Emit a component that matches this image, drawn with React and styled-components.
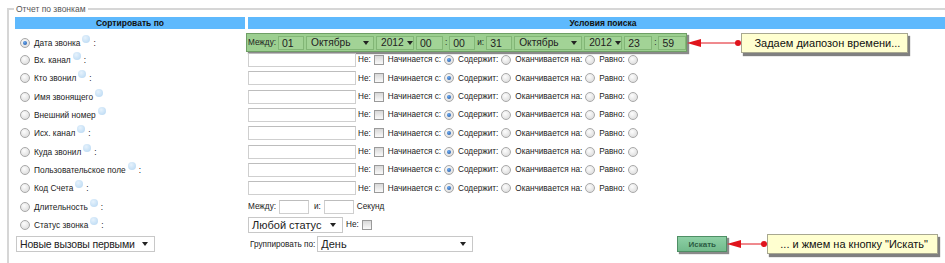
import React from 'react'
import styled, { createGlobalStyle } from 'styled-components'

const GlobalStyle = createGlobalStyle`
  body {
    margin: 0;
    overflow: hidden;
    background: #fff;
    color: #222;
    font-family: "Liberation Sans", Arial, sans-serif;
  }
`

const Fieldset = styled.fieldset`
  margin: 4px 0 0 7px;
  padding: 3px 0 20px 6px;
  width: 943px;
  border: 2px solid #d6d6d6;
  border-right: none;
  border-bottom: none;
`

const Legend = styled.legend`
  margin-left: -1px;
  padding: 0 2px;
  font-size: 8.5px;
  line-height: 10px;
  color: #555;
`

const Grid = styled.div`
  display: grid;
  grid-template-columns: 230px 1fr;
  column-gap: 3px;
  align-items: center;
  height: ${p => p.$h}px;
`

const Head = styled.div`
  height: 12px;
  line-height: 12px;
  background: #5eb9fd;
  font-size: 8.5px;
  font-weight: bold;
  text-align: center;
  color: #111;
`

const Spacer = styled.div`
  height: 3.5px;
`

const LeftCell = styled.div`
  display: flex;
  align-items: center;
  gap: 4px;
  padding-left: ${p => p.$pl ?? 5}px;
  font-size: 8.3px;
  white-space: nowrap;
`

const RightCell = styled.div`
  display: flex;
  align-items: center;
  gap: ${p => p.$gap ?? 3}px;
  font-size: 8.2px;
  white-space: nowrap;
`

const Radio = styled.span`
  position: relative;
  flex: none;
  width: 10px;
  height: 10px;
  box-sizing: border-box;
  border-radius: 50%;
  border: 1px solid #a8a8a8;
  background: radial-gradient(circle at 40% 35%, #fdfdfd, #d6d6d6);
  &::after {
    content: '';
    display: ${p => (p.$on ? 'block' : 'none')};
    position: absolute;
    left: 2px;
    top: 2px;
    width: 4px;
    height: 4px;
    border-radius: 50%;
    background: radial-gradient(circle at 40% 35%, #6aa9f0, #1a4f9c);
  }
`

const Check = styled.span`
  flex: none;
  width: 10px;
  height: 10px;
  box-sizing: border-box;
  border: 1px solid #9a9a9a;
  background: linear-gradient(#d8d8d8, #fafafa);
`

const Help = styled.span`
  display: inline-block;
  width: 8px;
  height: 8px;
  margin-left: 2px;
  border-radius: 50%;
  background: radial-gradient(circle at 40% 35%, #e6f2fc, #b4d6f2);
  transform: translateY(-3px);
`

const Colon = styled.span`
  margin-left: 3px;
`

const Text = styled.span`
  margin-left: ${p => p.$ml || 0}px;
`

const Field = styled.span`
  display: inline-flex;
  align-items: center;
  flex: none;
  box-sizing: border-box;
  width: ${p => p.$w}px;
  height: 14px;
  padding-left: 3px;
  font-size: 10.5px;
  background: ${p => (p.$green ? '#a2d396' : '#fff')};
  border: 1px solid ${p => (p.$green ? '#82b676' : '#cfcfcf')};
  border-top-color: ${p => (p.$green ? '#82b676' : '#bdbdbd')};
`

const Select = styled.span`
  display: inline-flex;
  align-items: center;
  justify-content: space-between;
  flex: none;
  box-sizing: border-box;
  width: ${p => p.$w}px;
  height: ${p => (p.$green ? 14 : 16)}px;
  padding: 0 ${p => (p.$green ? 4 : 6)}px 0 ${p => (p.$green ? 4 : 3)}px;
  font-size: ${p => p.$fs || (p.$green ? 10.2 : 11)}px;
  letter-spacing: ${p => p.$ls || 0}px;
  white-space: nowrap;
  overflow: hidden;
  background: ${p => (p.$green ? '#a2d396' : '#fff')};
  border: 1px solid ${p => (p.$green ? '#82b676' : '#c8c8c8')};
`

const Caret = styled.span`
  flex: none;
  margin-left: 3px;
  width: 0;
  height: 0;
  border-left: 3px solid transparent;
  border-right: 3px solid transparent;
  border-top: 4px solid #222;
`

const Highlight = styled.div`
  display: flex;
  align-items: center;
  gap: 2px;
  margin-left: -2px;
  height: 19px;
  box-sizing: border-box;
  padding: 0 0 0 1px;
  background: #9ccf90;
  border: 1px solid #6f9f66;
  box-shadow: 2px 2px 1px #8a8a8a;
`

const Callout = styled.div`
  display: flex;
  align-items: center;
  box-sizing: border-box;
  width: ${p => p.$w}px;
  height: 20px;
  padding-left: ${p => p.$pl || 12}px;
  background: #ffffd0;
  border: 1px solid #a8a890;
  box-shadow: 2px 3px 1px #808080;
  font-size: 11px;
  color: #111;
`

const Button = styled.span`
  display: inline-flex;
  align-items: center;
  justify-content: center;
  box-sizing: border-box;
  width: 50px;
  height: 16px;
  margin-left: 204px;
  background: linear-gradient(#8dd0a5, #72bb8c);
  border: 1px solid #4f8f65;
  box-shadow: 2px 2px 1px #8a8a8a;
  font-size: 8px;
  font-weight: bold;
  color: #2b5c43;
`

const Pointer = ({ w }) => (
  <svg width={w} height="12" viewBox={`0 0 ${w} 12`} style={{ flex: 'none' }}>
    <line x1="10" y1="6" x2={w - 3} y2="6" stroke="#e0141c" strokeWidth="1" />
    <polygon points="0,6 14,2 14,10" fill="#e0141c" />
    <circle cx={w - 3} cy="6" r="3" fill="#e0141c" />
  </svg>
)

const sortFields = [
  ['Дата звонка', true],
  ['Вх. канал', true],
  ['Кто звонил', true],
  ['Имя звонящего', false],
  ['Внешний номер', false],
  ['Исх. канал', true],
  ['Куда звонил', true],
  ['Пользовательское поле', true],
  ['Код Счета', true],
  ['Длительность', true],
  ['Статус звонка', true],
]

const Condition = () => (
  <RightCell>
    <Field $w={108} />
    <Text $ml={-1}>Не:</Text>
    <Check />
    <Text $ml={1}>Начинается с:</Text>
    <Radio $on />
    <Text $ml={1}>Содержит:</Text>
    <Radio />
    <Text $ml={1}>Оканчивается на:</Text>
    <Radio />
    <Text $ml={1}>Равно:</Text>
    <Radio />
  </RightCell>
)

const TimeRange = () => (
  <RightCell $gap={0}>
    <Highlight>
      <Text>Между:</Text>
      <Field $green $w={26}>01</Field>
      <Select $green $w={68}>Октябрь<Caret /></Select>
      <Select $green $w={38}>2012<Caret /></Select>
      <Field $green $w={27}>00</Field>
      <Text>:</Text>
      <Field $green $w={26}>00</Field>
      <Text>и:</Text>
      <Field $green $w={26}>31</Field>
      <Select $green $w={68}>Октябрь<Caret /></Select>
      <Select $green $w={38}>2012<Caret /></Select>
      <Field $green $w={28}>23</Field>
      <Text>:</Text>
      <Field $green $w={28}>59</Field>
    </Highlight>
    <Pointer w={54} />
    <Callout $w={167}>Задаем диапозон времени...</Callout>
  </RightCell>
)

const rightCells = [
  <TimeRange />,
  ...Array.from({ length: 8 }, () => <Condition />),
  <RightCell>
    <Text>Между:</Text>
    <Field $w={30} />
    <Text $ml={2}>и:</Text>
    <Field $w={30} />
    <Text>Секунд</Text>
  </RightCell>,
  <RightCell>
    <Select $w={95}>Любой статус<Caret /></Select>
    <Text>Не:</Text>
    <Check />
  </RightCell>,
]

export default function App() {
  return (
    <>
      <GlobalStyle />
      <Fieldset>
        <Legend>Отчет по звонкам</Legend>
        <Grid $h={12}>
          <Head>Сортировать по</Head>
          <Head>Условия поиска</Head>
        </Grid>
        <Spacer />
        {sortFields.map(([label, colon], i) => (
          <Grid key={label} $h={18.33}>
            <LeftCell>
              <Radio $on={i === 0} />
              <span>
                {label}
                <Help />
                {colon && <Colon>:</Colon>}
              </span>
            </LeftCell>
            {rightCells[i]}
          </Grid>
        ))}
        <Grid $h={20}>
          <LeftCell $pl={1}>
            <Select $w={139} $fs={10.5} $ls={-0.2}>Новые вызовы первыми<Caret /></Select>
          </LeftCell>
          <RightCell $gap={0}>
            <Text $ml={2}>Группировать по:</Text>
            <Select $w={156} style={{ marginLeft: 2 }}>День<Caret /></Select>
            <Button>Искать</Button>
            <Pointer w={40} />
            <Callout $w={171} $pl={12}>... и жмем на кнопку "Искать"</Callout>
          </RightCell>
        </Grid>
      </Fieldset>
    </>
  )
}
